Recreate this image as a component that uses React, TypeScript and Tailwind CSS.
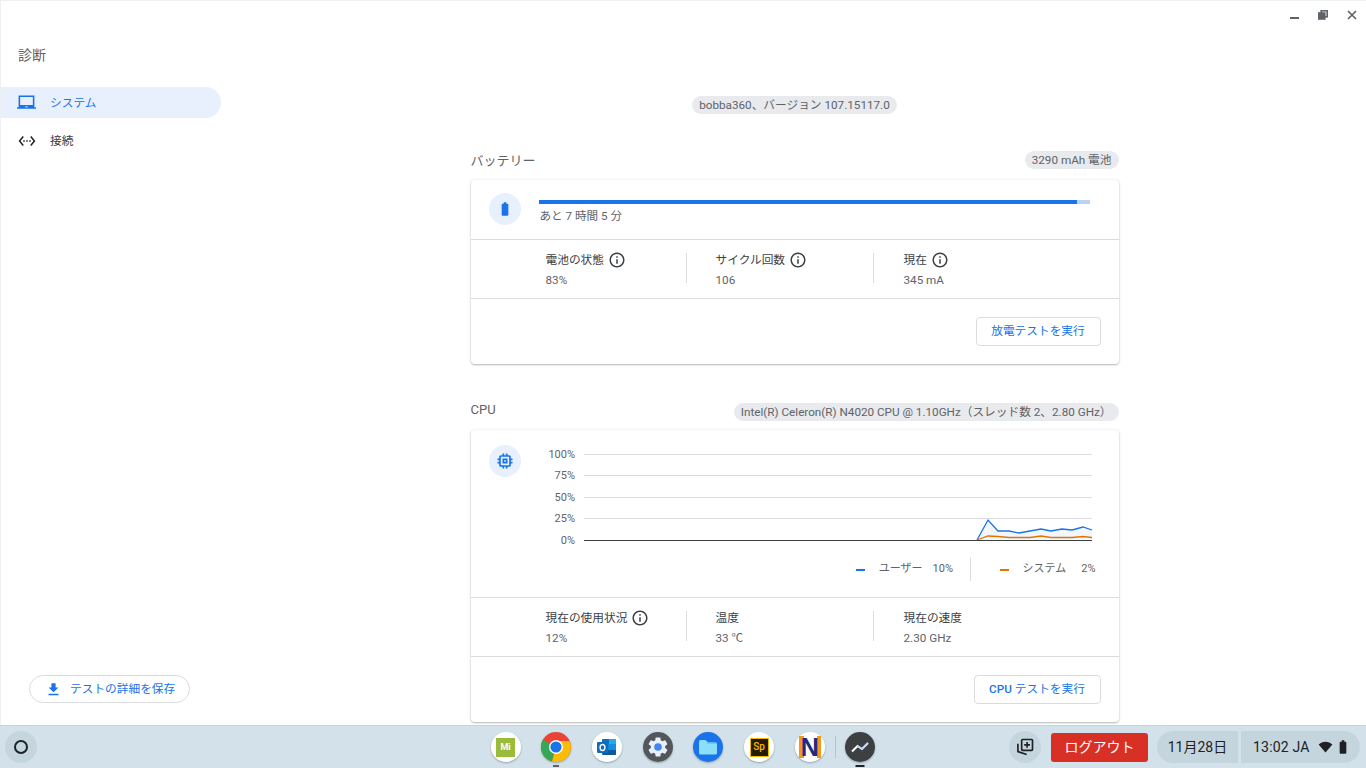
import type { ReactNode } from "react";

const paths = {
  laptop: "M22 18V3H2v15H0v2h24v-2h-2zm-8 0h-4v-1h4v1zm6-3H4V5h16v10z",
  ethernet:
    "M7.77 6.76L6.23 5.48.82 12l5.41 6.52 1.54-1.28L3.42 12l4.35-5.24zM7 13h2v-2H7v2zm10-2h-2v2h2v-2zm-6 2h2v-2h-2v2zm6.77-7.52l-1.54 1.28L20.58 12l-4.35 5.24 1.54 1.28L23.18 12l-5.41-6.52z",
  info: "M11 7h2v2h-2zm0 4h2v6h-2zm1-9C6.48 2 2 6.48 2 12s4.48 10 10 10 10-4.48 10-10S17.52 2 12 2zm0 18c-4.41 0-8-3.59-8-8s3.59-8 8-8 8 3.59 8 8-3.59 8-8 8z",
  battery:
    "M15.67 4H14V2h-4v2H8.33C7.6 4 7 4.6 7 5.33v15.33C7 21.4 7.6 22 8.33 22h7.33c.74 0 1.34-.6 1.34-1.33V5.33C17 4.6 16.4 4 15.67 4z",
  memory:
    "M15 9H9v6h6V9zm-2 4h-2v-2h2v2zm8-2V9h-2V7c0-1.1-.9-2-2-2h-2V3h-2v2h-2V3H9v2H7c-1.1 0-2 .9-2 2v2H3v2h2v2H3v2h2v2c0 1.1.9 2 2 2h2v2h2v-2h2v2h2v-2h2c1.1 0 2-.9 2-2v-2h2v-2h-2v-2h2zm-4 6H7V7h10v10z",
  download: "M19 9h-4V3H9v6H5l7 7 7-7zM5 18v2h14v-2H5z",
};

function Icon({ d, className }: { d: string; className?: string }) {
  return (
    <svg viewBox="0 0 24 24" fill="currentColor" className={className}>
      <path d={d} />
    </svg>
  );
}

function Chip({ children }: { children: ReactNode }) {
  return (
    <span className="inline-flex h-[18px] items-center whitespace-nowrap rounded-full bg-[#e8eaed] px-[7px] pt-px text-[11.7px] text-[#5f6368]">
      {children}
    </span>
  );
}

function Metric({
  label,
  value,
  info,
  width,
  pad,
  last,
}: {
  label: string;
  value: string;
  info?: boolean;
  width: string;
  pad: string;
  last?: boolean;
}) {
  return (
    <div className={`${width} ${pad} ${last ? "" : "border-r border-[#dadce0]"} flex h-[30px] flex-col`}>
      <div className="flex h-[14px] items-center gap-[4px] whitespace-nowrap text-[11.7px] leading-[14px] text-[#3c4043]">
        {label}
        {info && <Icon d={paths.info} className="h-[18px] w-[18px] text-[#3c4043]" />}
      </div>
      <div className="mt-[6px] whitespace-nowrap text-[11.7px] leading-[14px] text-[#5f6368]">{value}</div>
    </div>
  );
}

function Metrics({ children }: { children: ReactNode }) {
  return (
    <div className="flex h-[60px] items-center border-t border-b border-[#dadce0] pb-[2px] pl-[75px]">{children}</div>
  );
}

function RunButton({ children, width }: { children: ReactNode; width: string }) {
  return (
    <div className="flex h-[65px] items-start justify-end pr-[18px] pt-[18px]">
      <button
        type="button"
        className={`${width} h-[29px] rounded-[4px] border border-[#dadce0] bg-white pt-px text-[11.7px] text-[#1a73e8]`}
      >
        {children}
      </button>
    </div>
  );
}

function Card({ children }: { children: ReactNode }) {
  return (
    <div className="rounded-[4px] bg-white shadow-[0_1px_2px_rgba(60,64,67,0.35),0_0_3px_rgba(60,64,67,0.1)]">
      {children}
    </div>
  );
}

function RoundIcon({ d, size }: { d: string; size: string }) {
  return (
    <div className="flex h-8 w-8 shrink-0 items-center justify-center rounded-full bg-[#e8f0fe]">
      <Icon d={d} className={`${size} text-[#1a73e8]`} />
    </div>
  );
}

function CpuChart() {
  const grid = [
    { y: 25, label: "100%" },
    { y: 46, label: "75%" },
    { y: 68, label: "50%" },
    { y: 89, label: "25%" },
  ];
  // x/y in card-chart coords: origin is x=535, y=429 of the page
  const user = "442,111 453,91 463,102 474,102 484,104 495,102 506,100 516,102 527,100 537,101 548,98 557,101";
  const sys = "442,111 453,107 463,107.5 474,108.5 484,108.5 495,108.5 506,107 516,108.5 527,108.5 537,108.5 548,107.5 557,108.5";
  return (
    <svg viewBox="0 0 565 120" className="h-[120px] w-[565px] shrink-0">
      {grid.map((g) => (
        <g key={g.label}>
          <line x1="49" x2="557" y1={g.y + 0.5} y2={g.y + 0.5} stroke="#dadce0" />
          <text x="40" y={g.y + 4} textAnchor="end" fontSize="11" fill="#5f6368">
            {g.label}
          </text>
        </g>
      ))}
      <polygon points={`${user} 557,111`} fill="#1a73e8" opacity="0.06" />
      <polyline points={user} fill="none" stroke="#1a73e8" strokeWidth="1.3" />
      <polyline points={sys} fill="none" stroke="#e37400" strokeWidth="1.3" />
      <line x1="49" x2="557" y1="111.5" y2="111.5" stroke="#3c4043" />
      <text x="40" y="115" textAnchor="end" fontSize="11" fill="#5f6368">
        0%
      </text>
    </svg>
  );
}

function Legend() {
  return (
    <div className="flex h-[23px] items-center justify-end pr-[23px] text-[11px] text-[#5f6368]">
      <span className="h-[2px] w-[9px] bg-[#1a73e8]" />
      <span className="ml-[14px]">ユーザー</span>
      <span className="ml-[10px] w-[20px]">10%</span>
      <span className="ml-[17px] h-[23px] w-px bg-[#dadce0]" />
      <span className="ml-[29px] h-[2px] w-[9px] bg-[#e37400]" />
      <span className="ml-[14px]">システム</span>
      <span className="ml-[15px]">2%</span>
    </div>
  );
}

function ChromeLogo() {
  return (
    <svg viewBox="0 0 30 30" className="h-[30px] w-[30px]">
      <circle cx="15" cy="15" r="15" fill="#ea4335" />
      <path d="M15 15 2 7.5A15 15 0 0 0 11 29.5z" fill="#34a853" />
      <path d="M15 15h15A15 15 0 0 1 11 29.5z" fill="#fbbc04" />
      <path d="M15 9h13.4A15 15 0 0 1 30 15H15z" fill="#fbbc04" />
      <circle cx="15" cy="15" r="7" fill="#fff" />
      <circle cx="15" cy="15" r="5.6" fill="#1a73e8" />
    </svg>
  );
}

function OutlookLogo() {
  return (
    <div className="flex h-[30px] w-[30px] items-center justify-center rounded-full bg-white">
      <svg viewBox="0 0 20 18" className="h-[18px] w-[20px]">
        <rect x="5" y="1" width="14" height="16" rx="1" fill="#0a70c4" />
        <rect x="12" y="1" width="7" height="5" fill="#28a8ea" />
        <rect x="5" y="6" width="7" height="6" fill="#0f83d7" />
        <rect x="12" y="6" width="7" height="6" fill="#1490df" />
        <path d="M6 12h13v4a1 1 0 0 1-1 1H6z" fill="#0d5a9e" />
        <rect x="0" y="4" width="11" height="11" rx="1" fill="#0f6cbd" />
        <ellipse cx="5.5" cy="9.5" rx="2.4" ry="3" fill="none" stroke="#fff" strokeWidth="1.4" />
      </svg>
    </div>
  );
}

function SettingsLogo() {
  return (
    <svg viewBox="0 0 30 30" className="h-[30px] w-[30px]">
      <circle cx="15" cy="15" r="15" fill="#53565b" />
      <g transform="translate(3 3)">
        <path
          fill="#e8f0fe"
          d="M19.14 12.94c.04-.3.06-.61.06-.94 0-.32-.02-.64-.07-.94l2.03-1.58c.18-.14.23-.41.12-.61l-1.92-3.32c-.12-.22-.37-.29-.59-.22l-2.39.96c-.5-.38-1.03-.7-1.62-.94l-.36-2.54c-.04-.24-.24-.41-.48-.41h-3.84c-.24 0-.43.17-.47.41l-.36 2.54c-.59.24-1.13.57-1.62.94l-2.39-.96c-.22-.08-.47 0-.59.22L2.74 8.87c-.12.21-.08.47.12.61l2.03 1.58c-.05.3-.09.63-.09.94s.02.64.07.94l-2.03 1.58c-.18.14-.23.41-.12.61l1.92 3.32c.12.22.37.29.59.22l2.39-.96c.5.38 1.03.7 1.62.94l.36 2.54c.05.24.24.41.48.41h3.84c.24 0 .44-.17.47-.41l.36-2.54c.59-.24 1.13-.56 1.62-.94l2.39.96c.22.08.47 0 .59-.22l1.92-3.32c.12-.22.07-.47-.12-.61l-2.01-1.58z"
        />
        <circle cx="12" cy="12" r="3.8" fill="#4285f4" />
      </g>
    </svg>
  );
}

function FilesLogo() {
  return (
    <svg viewBox="0 0 30 30" className="h-[30px] w-[30px]">
      <circle cx="15" cy="15" r="15" fill="#1a73e8" />
      <path d="M6 9.5A1.5 1.5 0 0 1 7.5 8h5l2.5 2.5h7.5A1.5 1.5 0 0 1 24 12v9a1.5 1.5 0 0 1-1.5 1.5h-15A1.5 1.5 0 0 1 6 21z" fill="#8ae0f8" />
      <path d="M6 12h18v-.5A1.5 1.5 0 0 0 22.5 10.5H15L13.5 12z" fill="#63cdf0" />
    </svg>
  );
}

function WhiteBadge({ children }: { children: ReactNode }) {
  return (
    <div className="flex h-[30px] w-[30px] items-center justify-center rounded-full bg-white">{children}</div>
  );
}

function MiLogo() {
  return (
    <WhiteBadge>
      <div className="flex h-[19px] w-[19px] items-center justify-center bg-[#9bbb3b] text-[9px] font-bold leading-none text-white">
        Mi
      </div>
    </WhiteBadge>
  );
}

function SpLogo() {
  return (
    <WhiteBadge>
      <div className="flex h-[19px] w-[19px] items-center justify-center border-[1.5px] border-[#f5b800] bg-[#231a00] text-[10px] font-medium leading-none text-[#f5b800]">
        Sp
      </div>
    </WhiteBadge>
  );
}

function NLogo() {
  return (
    <WhiteBadge>
      <div className="relative flex h-[22px] w-[22px] items-center justify-center">
        <span className="absolute left-0 top-0 h-[22px] w-[5px] bg-[#f09a1a]" />
        <span className="absolute right-0 top-0 h-[22px] w-[4px] bg-[#f09a1a]" />
        <span className="relative font-[family-name:'Liberation_Sans',sans-serif] text-[25px] font-bold leading-none text-[#232a7c]">
          N
        </span>
      </div>
    </WhiteBadge>
  );
}

function DiagLogo() {
  return (
    <svg viewBox="0 0 30 30" className="h-[30px] w-[30px]">
      <circle cx="15" cy="15" r="15" fill="#3c4043" />
      <polyline points="7,19.5 12.5,14 17,17 23,11" fill="none" stroke="#fff" strokeWidth="2" />
      <polyline points="12.5,14 17,17 23,11" fill="none" stroke="#8ab4f8" strokeWidth="2" opacity="0.5" />
    </svg>
  );
}

function AppSlot({ children, dot }: { children: ReactNode; dot?: string }) {
  return (
    <div className="relative flex h-[42px] w-[50.7px] items-center justify-center">
      <div className="rounded-full shadow-[0_1px_2px_rgba(60,64,67,0.4)]">{children}</div>
      {dot && <span className={`absolute bottom-[1px] left-1/2 h-[2px] -translate-x-1/2 ${dot}`} />}
    </div>
  );
}

function Shelf() {
  return (
    <div className="grid h-[43px] grid-cols-[1fr_auto_1fr] items-center border-t border-[#c4d3dc] bg-[#d2e1ea]">
      <div className="pl-[5px]">
        <div className="flex h-8 w-8 items-center justify-center rounded-full bg-[#c5d5de]">
          <span className="h-[14px] w-[14px] rounded-full border-2 border-[#202124]" />
        </div>
      </div>
      <div className="flex items-center">
        <AppSlot><MiLogo /></AppSlot>
        <AppSlot dot="w-[6px] bg-[#5f6368]"><ChromeLogo /></AppSlot>
        <AppSlot><OutlookLogo /></AppSlot>
        <AppSlot><SettingsLogo /></AppSlot>
        <AppSlot><FilesLogo /></AppSlot>
        <AppSlot><SpLogo /></AppSlot>
        <AppSlot><NLogo /></AppSlot>
        <div className="-mx-[0.5px] h-[22px] w-px bg-[#b4c3cc]" />
        <AppSlot dot="w-[9px] bg-[#202124]"><DiagLogo /></AppSlot>
      </div>
      <div className="flex items-center justify-end pr-[6px]">
        <div className="flex h-8 w-8 items-center justify-center rounded-full bg-[#c5d5de]">
          <svg viewBox="0 0 24 24" className="h-5 w-5 text-[#202124]" fill="none" stroke="currentColor" strokeWidth="2">
            <rect x="8" y="3" width="13" height="13" rx="1" />
            <path d="M3.5 8v9.5L14 21" />
            <path d="M14.5 6v7M11 9.5h7" />
          </svg>
        </div>
        <div className="ml-[10px] flex h-[29px] w-[97px] items-center justify-center rounded-[3px] bg-[#d93025] text-[14px] text-white">
          ログアウト
        </div>
        <div className="ml-[9px] flex h-8 w-[81px] items-center justify-center rounded-l-full rounded-r-[4px] bg-[#c5d5de] text-[14px] text-[#202124]">
          11月28日
        </div>
        <div className="ml-[3px] flex h-8 w-[119px] items-center gap-[8px] rounded-l-[4px] rounded-r-full bg-[#c5d5de] pl-[12px] text-[14px] text-[#202124]">
          <span className="whitespace-nowrap tracking-[0.2px]">13:02 JA</span>
          <div className="flex items-center gap-[2px]">
            <svg viewBox="0 0 16 14" className="h-[12px] w-[15px]" fill="#202124">
              <path d="M8 13.5 0 4.2C2 2.3 4.8 1 8 1s6 1.3 8 3.2z" />
            </svg>
            <Icon d={paths.battery} className="h-[18px] w-[16px] text-[#202124]" />
          </div>
        </div>
      </div>
    </div>
  );
}

export default function App() {
  return (
    <div className="flex h-[768px] w-[1366px] flex-col overflow-hidden bg-white font-[family-name:Roboto,'Noto_Sans_CJK_JP',sans-serif]">
      <div className="relative flex h-[725px] border-l border-t border-[#eef0f1]">
        <div className="absolute right-[9px] top-[9px] flex items-center gap-[19px] text-[#5f6368]">
          <span className="mt-[5px] h-[2px] w-[9px] bg-[#5f6368]" />
          <svg viewBox="0 0 10 10" className="h-[10px] w-[10px]" fill="none" stroke="currentColor" strokeWidth="1.6">
            <rect x="3.2" y="0.8" width="6" height="6" />
            <rect x="0.8" y="3" width="6" height="6" fill="currentColor" />
          </svg>
          <svg viewBox="0 0 10 10" className="h-[10px] w-[10px]" fill="none" stroke="currentColor" strokeWidth="1.7">
            <path d="M1 1l8 8M9 1l-8 8" />
          </svg>
        </div>

        <aside className="flex w-[220px] shrink-0 flex-col">
          <h1 className="ml-[17px] mt-[45px] text-[14px] font-normal leading-[18px] text-[#5f6368]">診断</h1>
          <nav className="mt-[23px] flex flex-col gap-[7px] text-[11.7px]">
            <div className="flex h-[31px] items-center rounded-r-full bg-[#e8f0fe] pl-[16px] text-[#1a73e8]">
              <Icon d={paths.laptop} className="h-[19px] w-[19px]" />
              <span className="ml-[14px] mt-[2px]">システム</span>
            </div>
            <div className="flex h-[31px] items-center pl-[17px] text-[#3c4043]">
              <Icon d={paths.ethernet} className="h-[18px] w-[18px] text-[#202124]" />
              <span className="ml-[14px] mt-[2px]">接続</span>
            </div>
          </nav>
          <button
            type="button"
            className="mb-[22px] ml-[28px] mt-auto flex h-[28px] w-[161px] items-center rounded-full border border-[#dadce0] bg-white pl-[15px] text-[11.7px] text-[#1a73e8]"
          >
            <Icon d={paths.download} className="h-[17px] w-[17px]" />
            <span className="ml-[8px] mt-[2px]">テストの詳細を保存</span>
          </button>
        </aside>

        <main className="flex min-w-0 flex-1 justify-center overflow-hidden pl-[2px] pt-[95px]">
          <div className="flex w-[648px] shrink-0 flex-col">
            <div className="flex justify-center">
              <Chip>bobba360、バージョン 107.15117.0</Chip>
            </div>

            <section className="mt-[37px]">
              <div className="flex h-[18px] items-center justify-between">
                <h2 className="mt-[2px] text-[13px] font-normal text-[#5f6368]">バッテリー</h2>
                <Chip>3290 mAh 電池</Chip>
              </div>
              <div className="mt-[11px]">
                <Card>
                  <div className="flex h-[59px] items-start pl-[18px] pt-[13px]">
                    <RoundIcon d={paths.battery} size="h-[16px] w-[16px]" />
                    <div className="ml-[18px] w-[551px]">
                      <div className="mt-[7px] h-1 w-full bg-[#b9d3f6]">
                        <div className="h-1 w-[538px] bg-[#1a73e8]" />
                      </div>
                      <div className="ml-px mt-[3px] text-[11.6px] leading-[18px] text-[#5f6368]">あと 7 時間 5 分</div>
                    </div>
                  </div>
                  <Metrics>
                    <Metric label="電池の状態" value="83%" info width="w-[141px]" pad="" />
                    <Metric label="サイクル回数" value="106" info width="w-[187px]" pad="pl-[29px]" />
                    <Metric label="現在" value="345 mA" info width="w-[200px]" pad="pl-[30px]" last />
                  </Metrics>
                  <RunButton width="w-[125px]">放電テストを実行</RunButton>
                </Card>
              </div>
            </section>

            <section className="mt-[39px]">
              <div className="flex h-[18px] items-center justify-between">
                <h2 className="mb-[4px] text-[13px] font-normal text-[#5f6368]">CPU</h2>
                <Chip>Intel(R) Celeron(R) N4020 CPU @ 1.10GHz（スレッド数 2、2.80 GHz）</Chip>
              </div>
              <div className="mt-[9px]">
                <Card>
                  <div className="h-[167px]">
                    <div className="flex items-start pl-[18px] pt-[15px]">
                      <RoundIcon d={paths.memory} size="h-[20px] w-[20px]" />
                      <div className="-mt-[16px] ml-[14px]">
                        <CpuChart />
                      </div>
                    </div>
                    <div className="mt-[9px]">
                      <Legend />
                    </div>
                  </div>
                  <Metrics>
                    <Metric label="現在の使用状況" value="12%" info width="w-[141px]" pad="" />
                    <Metric label="温度" value="33 ℃" width="w-[187px]" pad="pl-[29px]" />
                    <Metric label="現在の速度" value="2.30 GHz" width="w-[200px]" pad="pl-[30px]" last />
                  </Metrics>
                  <RunButton width="w-[127px]">
                    <span className="font-medium">CPU</span> テストを実行
                  </RunButton>
                </Card>
              </div>
            </section>
          </div>
        </main>
      </div>
      <Shelf />
    </div>
  );
}
